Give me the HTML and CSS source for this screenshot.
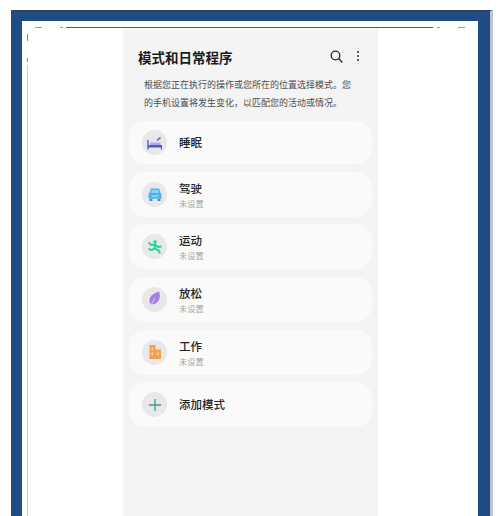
FILE: index.html
```html
<!DOCTYPE html>
<html>
<head>
  <title>模式和日常程序</title>
  <link rel="stylesheet" href="styles.css">
</head>
<body>
  <div class="frame">
    <div class="sheet">
      <div class="top-line"></div>
      <div class="mark mark-a"></div>
      <div class="mark mark-b"></div>
      <div class="mark mark-c"></div>
      <div class="mark mark-d"></div>
      <div class="side-mark side-a"></div>
      <div class="side-mark side-b"></div>
      <div class="side-line"></div>
      <div class="phone">
        <div class="header">
          <h1>模式和日常程序</h1>
          <svg class="search" width="13" height="13" viewBox="0 0 13 13"><circle cx="5.500" cy="5.500" r="4.300" fill="none" stroke="#2a2a2a" stroke-width="1.300"/><path d="M8.600 8.600 L12.400 12.400" stroke="#2a2a2a" stroke-width="1.400"/></svg>
          <div class="dots"><span></span><span></span><span></span></div>
        </div>
        <p class="intro">根据您正在执行的操作或您所在的位置选择模式。您的手机设置将发生变化，以匹配您的活动或情况。</p>
        <div class="list">
          <div class="row short">
            <div class="icon">
              <svg width="16" height="14" viewBox="0 0 16 14"><path d="M1 4v9.500" stroke="#4f58c4" stroke-width="1.300"/><path d="M1 9h14v4.500h-1.200V11.500H1z" fill="#4f58c4"/><path d="M3 6.500h10.500V9H3z" fill="#a9aeea"/><path d="M10 4.500l3.500-3" stroke="#4f58c4" stroke-width="1.500"/></svg>
            </div>
            <div class="name">睡眠</div>
          </div>
          <div class="row">
            <div class="icon">
              <svg width="14" height="13" viewBox="0 0 14 13"><path d="M2.800 .5h8.400l1.300 4.500 1 .8v5H.5v-5l1-.8z" fill="#4fb0ec"/><path d="M3.800 2h6.400l.8 3H3z" fill="#8fd0f5"/><path d="M3.500 7.500h7v1.200h-7z" fill="#b5e0f8"/><path d="M1.500 11h3v2h-3zM9.500 11h3v2h-3z" fill="#3a8fd0"/></svg>
            </div>
            <div class="text">
              <div class="name">驾驶</div>
              <div class="status">未设置</div>
            </div>
          </div>
          <div class="row">
            <div class="icon">
              <svg width="16" height="14" viewBox="0 0 16 14"><circle cx="8" cy="2" r="1.700" fill="#20d68c"/><path d="M1.500 2.500l3 2.500 3.500-.5 3 2.500 3.500-.5M7.500 5l.5 3.500 4 2.500 1 2.500M8 8.500L4.500 10 1.500 9" fill="none" stroke="#20d68c" stroke-width="2"/></svg>
            </div>
            <div class="text">
              <div class="name">运动</div>
              <div class="status">未设置</div>
            </div>
          </div>
          <div class="row">
            <div class="icon">
              <svg width="13" height="17" viewBox="0 0 13 17"><path d="M2.500 13C-.5 8 3 3 11 .5c2.500 6-.5 14-8.500 12.500z" fill="#a67de4"/><path d="M1.500 16.500L7 7" stroke="#dccdf6" stroke-width="1"/></svg>
            </div>
            <div class="text">
              <div class="name">放松</div>
              <div class="status">未设置</div>
            </div>
          </div>
          <div class="row">
            <div class="icon">
              <svg width="12" height="14" viewBox="0 0 12 14"><path d="M.5 0h6v4.500H12V14H.5z" fill="#f3a04c"/><path d="M2.500 2.500h1.500V5H2.500zM2.500 7.500h1.500V10H2.500zM8 7.500h1.800V10H8z" fill="#fad6b0"/></svg>
            </div>
            <div class="text">
              <div class="name">工作</div>
              <div class="status">未设置</div>
            </div>
          </div>
          <div class="row">
            <div class="icon">
              <svg width="14" height="14" viewBox="0 0 14 14"><path d="M7 1v12M1 7h12" stroke="#3f9d84" stroke-width="1.300"/></svg>
            </div>
            <div class="name">添加模式</div>
          </div>
        </div>
      </div>
    </div>
  </div>
</body>
</html>
```

FILE: styles.css
```css
html, body {
  margin: 0;
  height: 516px;
  overflow: hidden;
  background: #fff;
}

body {
  font-family: "Noto Sans CJK SC", "Liberation Sans", sans-serif;
  padding: 10px 7px 0 11px;
  box-sizing: border-box;
}

.frame {
  height: 506px;
  background: #1f4c85;
  border-top: 1px solid #2d4160;
  border-right: 3px solid #c2c4c8;
  padding: 10px 12px 0 11px;
  box-sizing: border-box;
}

.sheet {
  position: relative;
  height: 100%;
  background: #fff;
  display: flex;
  justify-content: center;
  padding: 8px 0 0 1px;
  box-sizing: border-box;
}

.top-line {
  position: absolute;
  top: 6px;
  left: 44px;
  width: 367px;
  height: 1px;
  background: #555;
}

.mark {
  position: absolute;
  top: 6px;
  height: 1px;
  background: #999;
}

.mark-a {
  left: 13px;
  width: 7px;
}

.mark-b {
  left: 38px;
  width: 3px;
}

.mark-c {
  left: 415px;
  width: 3px;
}

.mark-d {
  left: 436px;
  width: 7px;
}

.side-mark {
  position: absolute;
  left: 5px;
  width: 1px;
  background: #888;
}

.side-a {
  top: 13px;
  height: 7px;
}

.side-b {
  top: 37px;
  height: 4px;
}

.side-line {
  position: absolute;
  top: 44px;
  left: 5px;
  bottom: 0;
  width: 1px;
  background: #c4c8e4;
}

.phone {
  width: 255px;
  background: #f4f4f4;
  padding: 0 6px;
  box-sizing: border-box;
}

.header {
  display: flex;
  align-items: center;
  height: 24px;
  margin-top: 16px;
  padding: 0 9px;
}

h1 {
  margin: 0;
  flex: 1;
  font-size: 13.500px;
  font-weight: 700;
  color: #1a1a1a;
}

.search {
  margin-right: 14px;
  margin-bottom: 2px;
}

.dots {
  display: flex;
  flex-direction: column;
  gap: 2px;
  margin-right: 4px;
  margin-bottom: 2px;
}

.dots span {
  width: 2px;
  height: 2px;
  background: #333;
  border-radius: 50%;
}

.intro {
  margin: 7px 20px 9px 15px;
  font-size: 9px;
  line-height: 18px;
  color: #4c4c4c;
}

.list {
  display: flex;
  flex-direction: column;
  gap: 7.700px;
}

.row {
  height: 45px;
  background: #fafafa;
  border-radius: 16px;
  display: flex;
  align-items: center;
  padding-left: 13px;
}

.row.short {
  height: 43px;
}

.icon {
  width: 25px;
  height: 25px;
  border-radius: 50%;
  background: #e8e8ea;
  display: flex;
  align-items: center;
  justify-content: center;
  margin-right: 12px;
}

.text {
  padding-top: 1px;
}

.name {
  font-size: 11.500px;
  font-weight: 500;
  line-height: 17px;
  color: #222;
}

.status {
  font-size: 8.200px;
  line-height: 13px;
  color: #a6a6a6;
}
```
